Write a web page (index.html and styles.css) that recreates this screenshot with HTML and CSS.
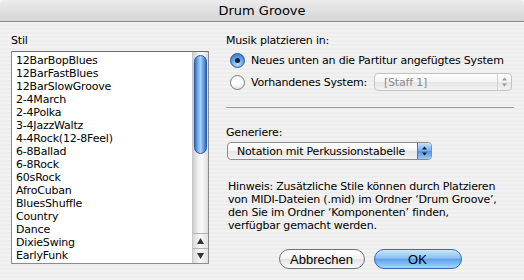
FILE: index.html
```
<!DOCTYPE html>
<html lang="de">

<head>
    <meta charset="UTF-8">
    <title>Drum Groove</title>
    <link rel="stylesheet" href="styles.css">
</head>

<body>
    <div class="window">
        <div class="titlebar">Drum Groove</div>

        <div class="content">
            <div class="left">
                <div class="label">Stil</div>
                <div class="listbox">
                    <ul class="items">
                        <li>12BarBopBlues</li>
                        <li>12BarFastBlues</li>
                        <li>12BarSlowGroove</li>
                        <li>2-4March</li>
                        <li>2-4Polka</li>
                        <li>3-4JazzWaltz</li>
                        <li>4-4Rock(12-8Feel)</li>
                        <li>6-8Ballad</li>
                        <li>6-8Rock</li>
                        <li>60sRock</li>
                        <li>AfroCuban</li>
                        <li>BluesShuffle</li>
                        <li>Country</li>
                        <li>Dance</li>
                        <li>DixieSwing</li>
                        <li>EarlyFunk</li>
                    </ul>
                    <div class="scrollbar">
                        <div class="track">
                            <div class="thumb"></div>
                        </div>
                        <div class="arrow">
                            <svg width="7" height="6" viewBox="0 0 7 6"><path d="M3.5 0 L7 6 L0 6 Z" fill="#333"/></svg>
                        </div>
                        <div class="arrow">
                            <svg width="7" height="6" viewBox="0 0 7 6"><path d="M0 0 L7 0 L3.5 6 Z" fill="#333"/></svg>
                        </div>
                    </div>
                </div>
            </div>

            <div class="right">
                <div class="label">Musik platzieren in:</div>
                <div class="radios">
                    <div class="radio-row">
                        <span class="radio on"></span>
                        <span>Neues unten an die Partitur angefügtes System</span>
                    </div>
                    <div class="radio-row">
                        <span class="radio"></span>
                        <span class="radio-text">Vorhandenes System:</span>
                        <div class="popup disabled staff">
                            <span>[Staff 1]</span>
                            <span class="cap">
                                <svg width="7" height="10" viewBox="0 0 7 10"><path d="M3.5 0.5 L6 3.5 L1 3.5 Z M1 6.5 L6 6.5 L3.5 9.5 Z" fill="#9a9a9a"/></svg>
                            </span>
                        </div>
                    </div>
                </div>

                <div class="divider"></div>

                <div class="label gen">Generiere:</div>
                <div class="popup notation">
                    <span>Notation mit Perkussionstabelle</span>
                    <span class="cap">
                        <svg width="7" height="10" viewBox="0 0 7 10"><path d="M3.5 0.5 L6 3.5 L1 3.5 Z M1 6.5 L6 6.5 L3.5 9.5 Z" fill="#1a1a1a"/></svg>
                    </span>
                </div>

                <p class="hint">Hinweis: Zusätzliche Stile können durch Platzieren von MIDI-Dateien (.mid) im Ordner ‘Drum Groove’, den Sie im Ordner ‘Komponenten’ finden, verfügbar gemacht werden.</p>

                <div class="buttons">
                    <button class="btn">Abbrechen</button>
                    <button class="btn default">OK</button>
                </div>
            </div>
        </div>
    </div>
</body>

</html>
```

FILE: styles.css
```
body {
    margin: 0;
    background-color: #f6f6f6;
    font-family: "DejaVu Sans", "Liberation Sans", sans-serif;
    font-size: 11px;
    letter-spacing: -0.2px;
    color: #000;
}

.window {
    width: 524px;
    height: 280px;
    border-radius: 5px 5px 0 0;
    overflow: hidden;
    background: repeating-linear-gradient(#ededed 0px, #ededed 2px, #f2f2f2 2px, #f2f2f2 4px);
}

.titlebar {
    height: 21px;
    line-height: 21px;
    text-align: center;
    font-size: 13px;
    letter-spacing: 0;
    background: linear-gradient(#ebebeb, #d6d6d6);
    border-bottom: 1px solid #8a8a8a;
}

.content {
    display: flex;
    gap: 17px;
    padding: 12px 10px 0 11px;
}

.label {
    height: 13px;
    line-height: 13px;
}

/* list box */

.left {
    width: 198px;
}

.listbox {
    margin-top: 4px;
    height: 211px;
    display: flex;
    background-color: #fff;
    border: 1px solid #8c8c8c;
    border-top-color: #6e6e6e;
}

.items {
    flex: 1;
    list-style: none;
    margin: 0;
    padding: 2px 0 0 4px;
}

.items li {
    height: 13px;
    line-height: 13px;
}

.scrollbar {
    width: 15px;
    display: flex;
    flex-direction: column;
    border-left: 1px solid #c8c8c8;
}

.track {
    flex: 1;
    padding: 3px 1px 0 1px;
    background: linear-gradient(to right, #cfcfcf, #f4f4f4 40%, #fafafa 60%, #dcdcdc);
}

.thumb {
    height: 97px;
    border-radius: 7px;
    border: 1px solid #2b5aa3;
    background: linear-gradient(to right, #3572c9, #7fb3ee 30%, #a9d0f7 50%, #6aa3e8 75%, #2f67bd);
}

.arrow {
    height: 14px;
    display: flex;
    align-items: center;
    justify-content: center;
    border-top: 1px solid #b4b4b4;
    background: linear-gradient(to right, #dadada, #f7f7f7 50%, #e2e2e2);
}

/* right side */

.right {
    width: 288px;
}

.radios {
    margin-top: 4px;
    display: flex;
    flex-direction: column;
    gap: 4px;
}

.radio-row {
    height: 18px;
    display: flex;
    align-items: center;
    padding-left: 4px;
}

.radio {
    width: 13px;
    height: 13px;
    margin-right: 6px;
    border-radius: 50%;
    border: 1px solid #7a7a7a;
    background: linear-gradient(#f4f4f4, #ffffff 60%, #e4e4e4);
    display: flex;
    align-items: center;
    justify-content: center;
}

.radio.on {
    border-color: #2c5596;
    background: radial-gradient(circle at 50% 80%, #b8defc, #5f9ce6 55%, #2f6cc4);
}

.radio.on::after {
    content: "";
    width: 5px;
    height: 5px;
    border-radius: 50%;
    background-color: #10213d;
}

.radio-text {
    width: 123px;
}

.popup {
    height: 16px;
    display: flex;
    align-items: center;
    border: 1px solid #8d8d8d;
    border-radius: 4px;
    background: linear-gradient(#ffffff, #f4f4f4 50%, #e6e6e6 51%, #f2f2f2);
    overflow: hidden;
}

.popup span:first-child {
    flex: 1;
    padding-left: 9px;
}

.popup .cap {
    width: 13px;
    height: 16px;
    display: flex;
    align-items: center;
    justify-content: center;
    border-left: 1px solid #8d8d8d;
}

.staff {
    width: 136px;
}

.disabled {
    color: #8a8a8a;
    border-color: #c4c4c4;
}

.disabled .cap {
    border-left-color: #d0d0d0;
}

.notation {
    margin-top: 3px;
    margin-left: 1px;
    width: 203px;
}

.notation .cap {
    background: linear-gradient(#c6e1fb, #74aef0 50%, #4f93e4 51%, #9acbf7);
    border-left-color: #4a78b8;
}

.divider {
    margin-top: 16px;
    height: 1px;
    background-color: #9a9a9a;
}

.gen {
    margin-top: 18px;
}

.hint {
    margin: 20px 0 0 2px;
    line-height: 13px;
    width: 272px;
}

.buttons {
    margin-top: 17px;
    display: flex;
    justify-content: center;
    gap: 9px;
}

.btn {
    width: 86px;
    height: 20px;
    padding: 0;
    font-family: "Liberation Sans", sans-serif;
    font-size: 13px;
    letter-spacing: 0;
    border: 1px solid #727272;
    border-radius: 10px;
    background: linear-gradient(#ffffff, #f3f3f3 50%, #e2e2e2 51%, #fafafa);
    color: #000;
}

.btn.default {
    width: 88px;
    border-color: #3a6bb3;
    background: linear-gradient(#cde6fd, #8cc0f5 45%, #5da2ec 52%, #a6d5fc);
}
```
